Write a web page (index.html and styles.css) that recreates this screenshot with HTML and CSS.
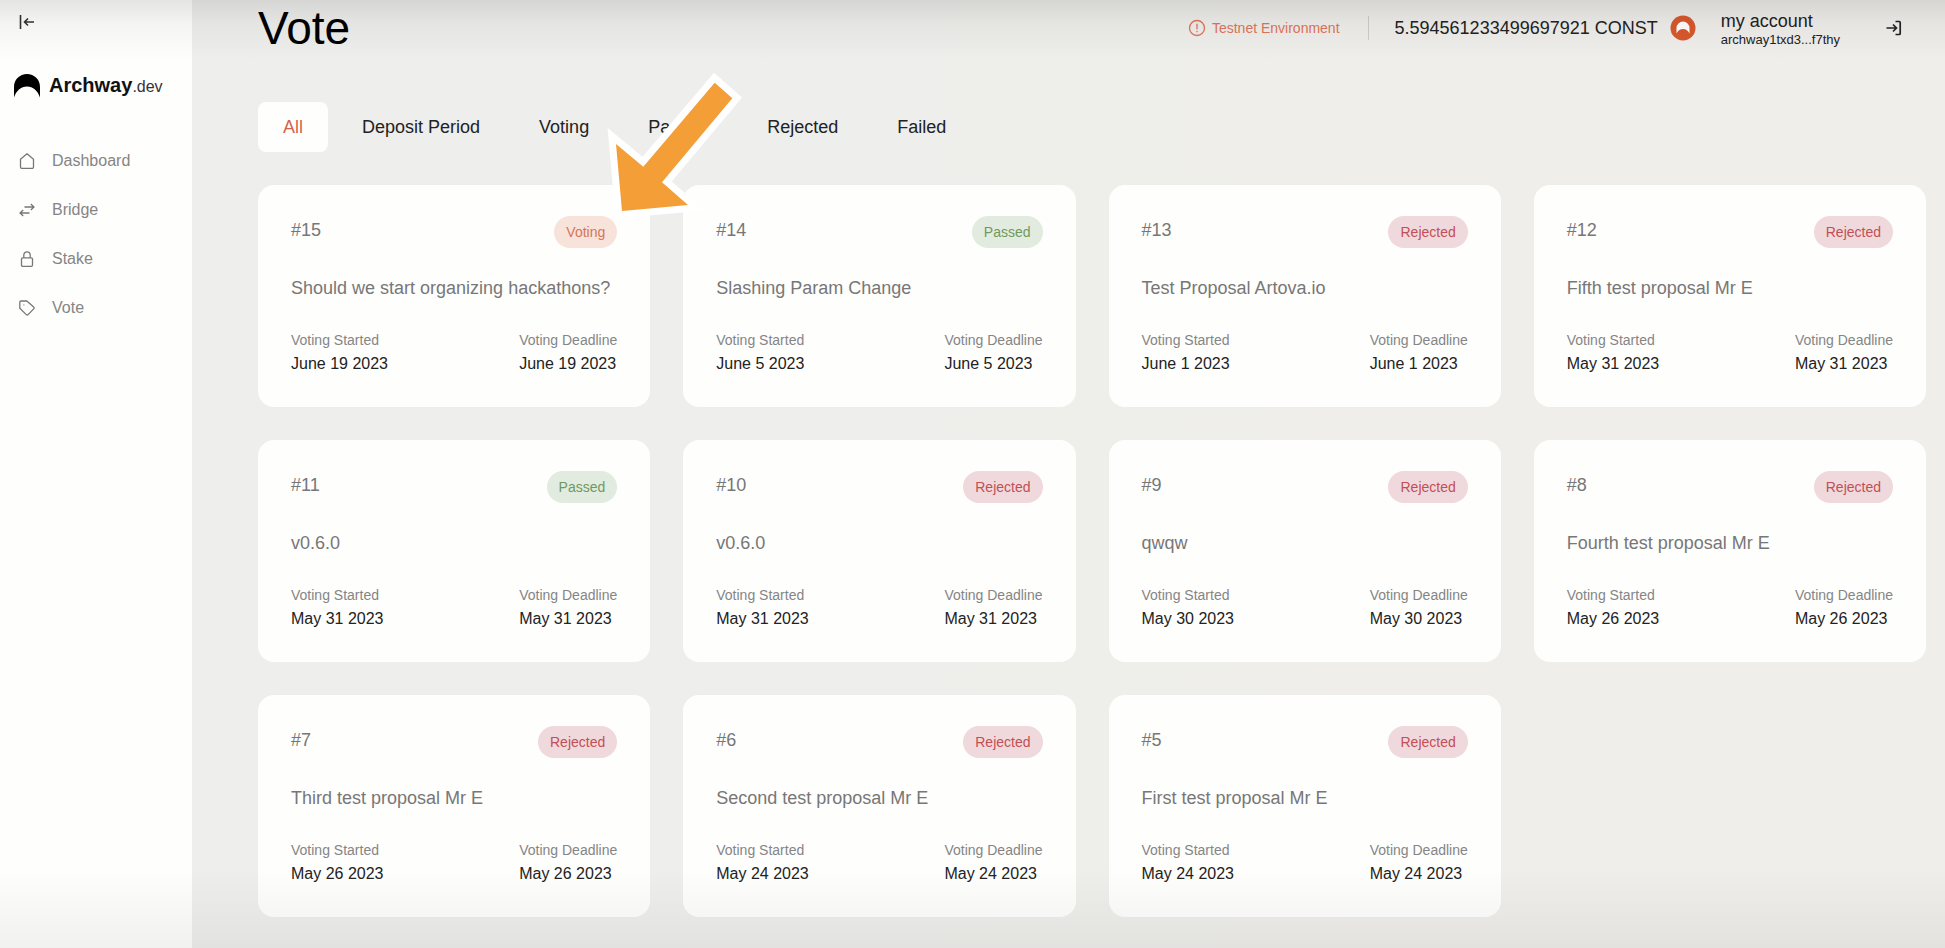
FILE: index.html
```html
<!DOCTYPE html>
<html lang="en">
<head>
<meta charset="utf-8">
<title>Vote - Archway.dev</title>
<link rel="stylesheet" href="styles.css">
</head>
<body>
<div class="app">
  <aside class="sidebar">
    <button class="icon-button collapse" type="button" aria-label="Collapse sidebar">
      <svg width="16" height="16" viewBox="0 0 16 16" fill="none" stroke="#333" stroke-width="1.6"><path d="M1.500 1v14M15 8H5.500M9 4.500 5.500 8 9 11.500"/></svg>
    </button>
    <a class="logo" href="#">
      <svg width="26" height="24" viewBox="0 0 26 24" fill="#000"><path d="M0 23.500V13C0 5.500 5.800 0 13 0s13 5.500 13 13v10.500C24 17 19 12.500 13 12.500S2 17 0 23.500z"/></svg>
      <span class="logo-name">Archway<span class="logo-suffix">.dev</span></span>
    </a>
    <nav class="nav">
      <a href="#"><svg width="16" height="16" viewBox="0 0 16 16"><path d="M1.500 6.200 8 .8l6.500 5.400V14a1.300 1.300 0 0 1-1.300 1.300H2.800A1.300 1.300 0 0 1 1.500 14z"/></svg>Dashboard</a>
      <a href="#"><svg width="16" height="16" viewBox="0 0 16 16"><path d="M5.500 5H15M11.800 2 15 5l-3.200 3M10.500 11H1M4.200 8 1 11l3.200 3"/></svg>Bridge</a>
      <a href="#"><svg width="16" height="16" viewBox="0 0 16 16"><rect x="2.500" y="6.800" width="11" height="8.500" rx="1.300"/><path d="M4.800 6.800V4a3.200 3.200 0 0 1 6.400 0v2.800"/></svg>Stake</a>
      <a href="#"><svg width="16" height="16" viewBox="0 0 16 16"><path d="M.8 2.200A1.200 1.200 0 0 1 2 1h5.800l6.900 6.100a1.300 1.300 0 0 1 0 1.800l-5.600 5.700a1.300 1.300 0 0 1-1.800 0L.8 8.200z"/><path d="M4.500 4.800h.8"/></svg>Vote</a>
    </nav>
  </aside>

  <main class="main">
    <header class="header">
      <h1>Vote</h1>
      <div class="status">
        <p class="network"><svg width="18" height="18" viewBox="0 0 18 18" fill="none" stroke="currentColor" stroke-width="1.300"><circle cx="9" cy="9" r="7.500"/><path d="M9 4.800v5.400M9 11.800v1.400"/></svg>Testnet Environment</p>
        <p class="balance">5.594561233499697921 CONST
          <svg width="26" height="26" viewBox="0 0 26 26"><circle cx="13" cy="13" r="12.500" fill="#d9582c"/><path d="M6.500 18.500V13a6.500 6.500 0 0 1 13 0v5.500C18.300 15.800 16 14 13 14s-5.300 1.800-6.500 4.500z" fill="#fff"/></svg>
        </p>
        <div class="account"><span class="account-name">my account</span><span class="account-address">archway1txd3...f7thy</span></div>
        <button class="icon-button logout" type="button" aria-label="Log out">
          <svg width="16" height="16" viewBox="0 0 16 16" fill="none" stroke="#222" stroke-width="1.700"><path d="M.5 8h10M7 4.500 10.500 8 7 11.500M9.500 1.500h3.700a1 1 0 0 1 1 1v11a1 1 0 0 1-1 1H9.500"/></svg>
        </button>
      </div>
    </header>

    <div class="tabs">
      <button class="tab active" type="button">All</button>
      <button class="tab" type="button">Deposit Period</button>
      <button class="tab" type="button">Voting</button>
      <button class="tab" type="button">Passed</button>
      <button class="tab" type="button">Rejected</button>
      <button class="tab" type="button">Failed</button>
    </div>

    <section class="proposals" id="proposals" aria-label="Proposals"></section>
  </main>

  <svg class="pointer" width="150" height="160" viewBox="600 66 150 160" aria-hidden="true">
    <path d="M622 211 616 144 643.300 166.700 714.700 82.700 732.300 98.300 662 182.300 688 205z"/>
  </svg>
</div>
<script src="script.js"></script>
</body>
</html>
```
FILE: styles.css
```css
* {
  box-sizing: border-box;
}

body {
  margin: 0;
  font-family: "Liberation Sans", Arial, sans-serif;
  font-size: 18px;
  line-height: 28px;
  color: #222;
}

h1, h2, p, dl, dd {
  margin: 0;
  font-weight: 400;
}

button {
  border: 0;
  padding: 0;
  background: none;
  font: inherit;
  color: inherit;
  cursor: pointer;
}

a {
  color: inherit;
  text-decoration: none;
}

svg {
  flex: none;
}

.app {
  position: relative;
  display: flex;
  min-height: 100vh;
  background: linear-gradient(90deg, #eeeeed 20%, #efeeeb 70%);
}

/* soft shade along the top and bottom edges */
.app::after {
  content: "";
  position: absolute;
  inset: 0;
  pointer-events: none;
  background:
    linear-gradient(rgba(0, 0, 0, .1), rgba(0, 0, 0, .04) 24px, transparent 60px),
    linear-gradient(0deg, rgba(0, 0, 0, .05), transparent 80px);
}

.sidebar {
  flex: none;
  width: 192px;
  padding: 14px 14px 0;
  background: #fefefd;
}

.icon-button {
  display: flex;
}

.collapse {
  margin-left: 5px;
}

.logo {
  display: flex;
  align-items: center;
  gap: 9px;
  margin-top: 41px;
}

.logo-name {
  font-size: 20px;
  font-weight: 700;
  color: #111;
}

.logo-suffix {
  font-size: 16px;
  font-weight: 400;
  color: #333;
}

.nav {
  display: flex;
  flex-direction: column;
  gap: 25px;
  margin-top: 48px;
  padding-left: 5px;
}

.nav a {
  display: flex;
  align-items: center;
  gap: 17px;
  font-size: 16px;
  line-height: 24px;
  color: #858585;
}

.nav svg {
  fill: none;
  stroke: #777;
  stroke-width: 1.3;
  stroke-linejoin: round;
}

.main {
  flex: 1;
  min-width: 0;
  padding: 0 19px 31px 66px;
}

.header {
  display: flex;
  justify-content: space-between;
}

h1 {
  font-size: 46px;
  line-height: 56px;
  color: #000;
}

.status {
  display: flex;
  align-items: center;
}

.network {
  display: flex;
  align-items: center;
  gap: 6px;
  padding-right: 28px;
  border-right: 1px solid #ccc;
  font-size: 14px;
  line-height: 24px;
  color: #e0755a;
}

.balance {
  display: flex;
  align-items: center;
  gap: 12px;
  margin-left: 26px;
}

.account {
  display: flex;
  flex-direction: column;
  margin: 4px 46px 0 25px;
  line-height: 20px;
}

.account-address {
  font-size: 13px;
  line-height: 18px;
}

.logout {
  margin-right: 24px;
}

.tabs {
  display: flex;
  gap: 9px;
  margin: 46px 0 33px;
}

.tab {
  padding: 11px 25px;
  border-radius: 8px;
}

.tab.active {
  background: #fefefd;
  color: #d6624f;
}

.proposals {
  display: grid;
  grid-template-columns: repeat(4, 1fr);
  gap: 33px;
}

.card {
  padding: 31px 33px;
  border-radius: 16px;
  background: #fefefd;
}

.card-head {
  display: flex;
  justify-content: space-between;
  align-items: flex-start;
  color: #777;
}

.badge {
  padding: 0 12px;
  border-radius: 16px;
  font-size: 14px;
  line-height: 32px;
}

.badge.voting {
  background: #f7e3da;
  color: #d67558;
}

.badge.passed {
  background: #e2ebe0;
  color: #6f9a5c;
}

.badge.rejected {
  background: #f0d9dc;
  color: #c34f56;
}

.card h2 {
  margin: 26px 0;
  font-size: 18px;
  color: #777;
}

.dates {
  display: flex;
  justify-content: space-between;
  line-height: 24px;
}

.dates dt {
  font-size: 14px;
  color: #858585;
}

.dates dd {
  font-size: 16px;
}

.pointer {
  position: absolute;
  left: 600px;
  top: 66px;
  z-index: 1;
  pointer-events: none;
}

.pointer path {
  fill: #f39e36;
  stroke: #fff;
  stroke-width: 14;
  stroke-miterlimit: 10;
  paint-order: stroke;
}
```
FILE: script.js
```js
const proposals = [
  [15, "Voting", "Should we start organizing hackathons?", "June 19 2023"],
  [14, "Passed", "Slashing Param Change", "June 5 2023"],
  [13, "Rejected", "Test Proposal Artova.io", "June 1 2023"],
  [12, "Rejected", "Fifth test proposal Mr E", "May 31 2023"],
  [11, "Passed", "v0.6.0", "May 31 2023"],
  [10, "Rejected", "v0.6.0", "May 31 2023"],
  [9, "Rejected", "qwqw", "May 30 2023"],
  [8, "Rejected", "Fourth test proposal Mr E", "May 26 2023"],
  [7, "Rejected", "Third test proposal Mr E", "May 26 2023"],
  [6, "Rejected", "Second test proposal Mr E", "May 24 2023"],
  [5, "Rejected", "First test proposal Mr E", "May 24 2023"],
];

document.getElementById("proposals").innerHTML = proposals.map(([id, status, title, date]) => `
  <article class="card">
    <div class="card-head"><span>#${id}</span><span class="badge ${status.toLowerCase()}">${status}</span></div>
    <h2>${title}</h2>
    <dl class="dates">
      <div><dt>Voting Started</dt><dd>${date}</dd></div>
      <div><dt>Voting Deadline</dt><dd>${date}</dd></div>
    </dl>
  </article>`).join("");
```
